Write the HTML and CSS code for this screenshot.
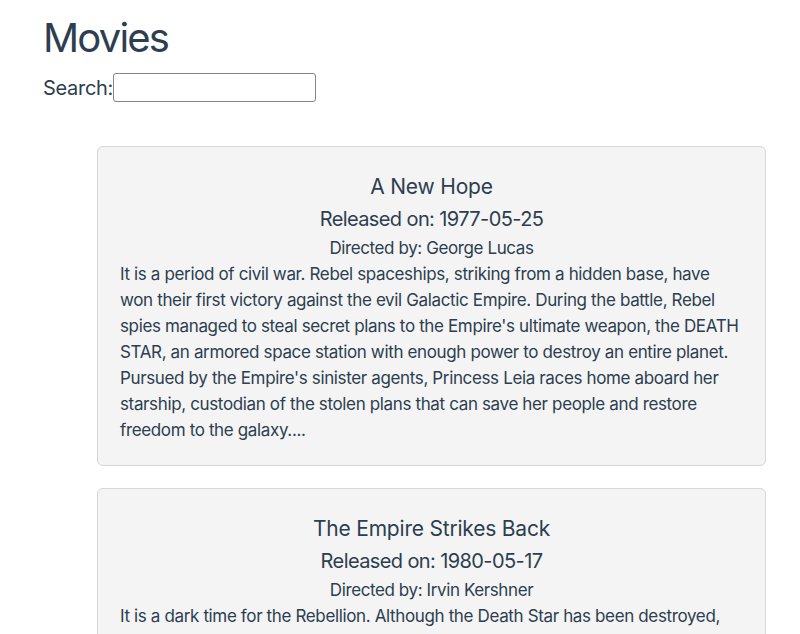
FILE: index.html
```html
<!DOCTYPE html>
<html lang="en">
<head>
  <meta charset="UTF-8" />
  <title>Movies</title>
  <link rel="stylesheet" href="styles.css">
</head>
<body>
  <div class="app">
    <h1 class="page-title">Movies</h1>
    <div class="search">
      <label for="search">Search:</label><input type="text" id="search">
    </div>
    <div class="movie-list">
      <div class="movie-card">
        <h3 class="movie-title">A New Hope</h3>
        <h4 class="movie-release">Released on: 1977-05-25</h4>
        <h5 class="movie-director">Directed by: George Lucas</h5>
        <p class="movie-crawl">It is a period of civil war. Rebel spaceships, striking from a hidden base, have won their first victory against the evil Galactic Empire. During the battle, Rebel spies managed to steal secret plans to the Empire's ultimate weapon, the DEATH STAR, an armored space station with enough power to destroy an entire planet. Pursued by the Empire's sinister agents, Princess Leia races home aboard her starship, custodian of the stolen plans that can save her people and restore freedom to the galaxy....</p>
      </div>
      <div class="movie-card">
        <h3 class="movie-title">The Empire Strikes Back</h3>
        <h4 class="movie-release">Released on: 1980-05-17</h4>
        <h5 class="movie-director">Directed by: Irvin Kershner</h5>
        <p class="movie-crawl">It is a dark time for the Rebellion. Although the Death Star has been destroyed, Imperial troops have driven the Rebel forces from their hidden base and pursued them across the galaxy. Evading the dreaded Imperial Starfleet, a group of freedom fighters led by Luke Skywalker has established a new secret base on the remote ice world of Hoth.</p>
      </div>
    </div>
  </div>
</body>
</html>
```

FILE: styles.css
```css
* { box-sizing: border-box; }
body {
  margin: 0;
  font-family: Inter, 'Liberation Sans', sans-serif;
  color: #2c3e50;
  background: #fff;
}
.app {
  padding: 14px 34px 0 43px;
}
.page-title {
  margin: 0;
  font-size: 40px;
  font-weight: 400;
  line-height: 48px;
  letter-spacing: -1.8px;
}
.search {
  display: flex;
  align-items: center;
  font-size: 20px;
  letter-spacing: -0.3px;
  margin-top: 11px;
}
.search input {
  width: 203px;
  height: 29px;
  border: 1px solid #858585;
  border-radius: 3px;
  font-size: 16px;
  padding: 2px 6px;
}
.movie-list {
  margin-top: 44px;
  margin-left: 54px;
  display: flex;
  flex-direction: column;
  gap: 22px;
}
.movie-card {
  background: #f4f4f4;
  border: 1px solid #d6d6d6;
  border-radius: 6px;
  padding: 24px 22px 22px;
  text-align: center;
}
.movie-title {
  margin: 0;
  font-size: 21px;
  font-weight: 400;
  line-height: 32px;
  letter-spacing: -0.2px;
}
.movie-release {
  margin: 0;
  font-size: 20px;
  font-weight: 400;
  line-height: 32px;
  letter-spacing: -0.6px;
}
.movie-director {
  margin: 0;
  font-size: 17px;
  font-weight: 400;
  line-height: 26px;
  letter-spacing: -0.4px;
}
.movie-crawl {
  margin: 0;
  text-align: left;
  font-size: 17px;
  line-height: 26px;
  letter-spacing: -0.36px;
}
```
